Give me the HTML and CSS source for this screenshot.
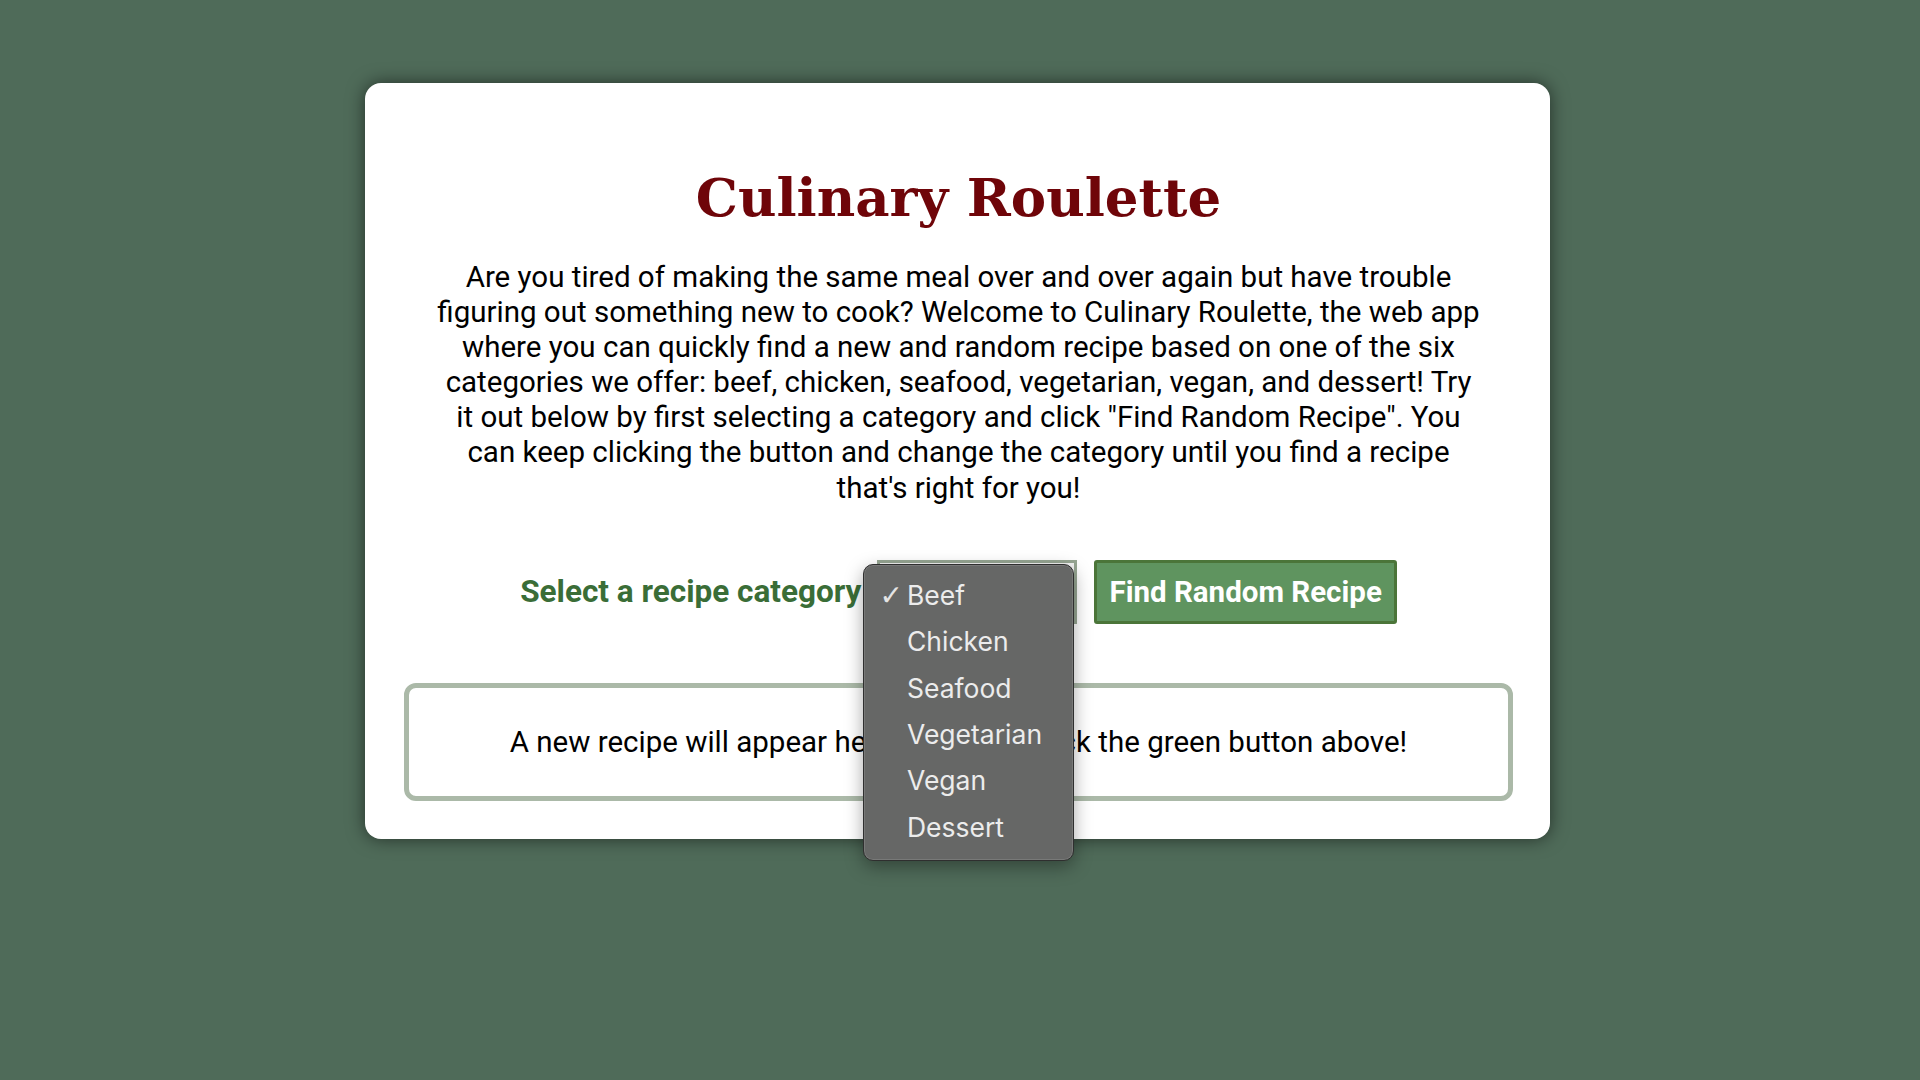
FILE: index.html
```html
<!DOCTYPE html>
<html lang="en">
<head>
<meta charset="utf-8">
<title>Culinary Roulette</title>
<link rel="stylesheet" href="styles.css">
</head>
<body>
<main class="card">
  <h1 class="title">Culinary Roulette</h1>
  <p class="intro">Are you tired of making the same meal over and over again but have trouble figuring out something new to cook? Welcome to Culinary Roulette, the web app where you can quickly find a new and random recipe based on one of the six categories we offer: beef, chicken, seafood, vegetarian, vegan, and dessert! Try it out below by first selecting a category and click "Find Random Recipe". You can keep clicking the button and change the category until you find a recipe that's right for you!</p>
  <div class="controls">
    <label class="label">Select a recipe category</label>
    <div class="select-wrap">
      <div class="select">Beef</div>
      <div class="menu">
        <div class="menu-item checked"><span class="check">✓</span>Beef</div>
        <div class="menu-item">Chicken</div>
        <div class="menu-item">Seafood</div>
        <div class="menu-item">Vegetarian</div>
        <div class="menu-item">Vegan</div>
        <div class="menu-item">Dessert</div>
      </div>
    </div>
    <button class="btn">Find Random Recipe</button>
  </div>
  <div class="result">A new recipe will appear here when you click the green button above!</div>
</main>
</body>
</html>
```

FILE: styles.css
```css
html, body {
  margin: 0;
  padding: 0;
}
body {
  background: #4f6b59;
  min-height: 1080px;
  font-family: Roboto, "Liberation Sans", sans-serif;
  padding-top: 83px;
  box-sizing: border-box;
}
.card {
  width: 1185px;
  box-sizing: border-box;
  margin: 0 0 0 calc(50% - 595px);
  background: #ffffff;
  border-radius: 16px;
  box-shadow: 0 0 18px rgba(0, 0, 0, 0.55);
  padding: 79px 37px 38px 39px;
  text-align: center;
}
.title {
  margin: 0;
  font-family: "DejaVu Serif", "Liberation Serif", serif;
  font-weight: bold;
  font-size: 53px;
  line-height: 70px;
  color: #6f0509;
}
.intro {
  margin: 28px 32px 0;
  font-size: 29.5px;
  line-height: 35.1px;
  color: #000;
}
.controls {
  display: flex;
  justify-content: center;
  align-items: center;
  gap: 16px;
  margin-top: 54px;
}
.label {
  font-weight: bold;
  font-size: 31.5px;
  color: #3a6d37;
}
.select-wrap {
  position: relative;
}
.select {
  width: 200px;
  height: 64px;
  box-sizing: border-box;
  border: 3px solid #97a693;
  background: #f3f3f3;
  font-size: 26px;
  line-height: 58px;
  text-align: left;
  padding-left: 12px;
}
.menu {
  position: absolute;
  left: -14px;
  top: 4px;
  width: 211px;
  box-sizing: border-box;
  padding: 7.5px 0 10.5px;
  background: #666766;
  border: 1px solid #2f2f2f;
  border-radius: 10px;
  box-shadow: 0 6px 18px rgba(0, 0, 0, 0.35), inset 0 0 0 1px rgba(255,255,255,0.12);
  text-align: left;
  z-index: 10;
}
.menu-item {
  position: relative;
  height: 46.3px;
  line-height: 46px;
  padding-left: 42.5px;
  font-family: Inter, "Liberation Sans", sans-serif;
  font-size: 26.5px;
  color: #ececec;
}
.check {
  position: absolute;
  left: 15px;
  top: 1px;
  font-family: "DejaVu Sans", sans-serif;
  font-size: 28px;
  color: #e4e4e4;
}
.btn {
  height: 64px;
  box-sizing: border-box;
  padding: 0 12px;
  background: #5f945f;
  border: 3px solid #4b7539;
  border-radius: 3px;
  color: #ffffff;
  font-family: Roboto, "Liberation Sans", sans-serif;
  font-weight: bold;
  font-size: 29.5px;
  margin-left: 1px;
}
.result {
  margin-top: 59px;
  height: 118px;
  box-sizing: border-box;
  border: 5px solid #abb9a8;
  border-radius: 12px;
  display: flex;
  align-items: center;
  justify-content: center;
  font-size: 29.5px;
  color: #000;
}
```
